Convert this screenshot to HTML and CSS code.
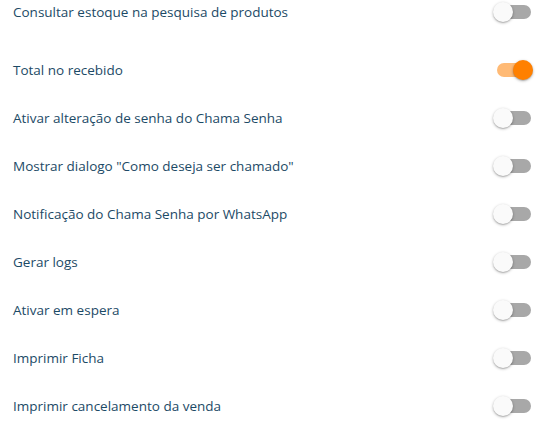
FILE: index.html
```html
<!DOCTYPE html>
<html lang="pt-BR">
<head>
    <meta charset="UTF-8">
    <meta name="viewport" content="width=device-width, initial-scale=1.0">
    <title>Configurações</title>
    <link rel="stylesheet" href="styles.css">
</head>
<body>
    <div class="settings">
        <div class="row first">
            <span class="label">Consultar estoque na pesquisa de produtos</span>
            <label class="switch"><input type="checkbox"><span class="track"></span><span class="thumb"></span></label>
        </div>
        <div class="row">
            <span class="label">Total no recebido</span>
            <label class="switch"><input type="checkbox" checked><span class="track"></span><span class="thumb"></span></label>
        </div>
        <div class="row">
            <span class="label">Ativar alteração de senha do Chama Senha</span>
            <label class="switch"><input type="checkbox"><span class="track"></span><span class="thumb"></span></label>
        </div>
        <div class="row">
            <span class="label">Mostrar dialogo "Como deseja ser chamado"</span>
            <label class="switch"><input type="checkbox"><span class="track"></span><span class="thumb"></span></label>
        </div>
        <div class="row">
            <span class="label">Notificação do Chama Senha por WhatsApp</span>
            <label class="switch"><input type="checkbox"><span class="track"></span><span class="thumb"></span></label>
        </div>
        <div class="row">
            <span class="label">Gerar logs</span>
            <label class="switch"><input type="checkbox"><span class="track"></span><span class="thumb"></span></label>
        </div>
        <div class="row">
            <span class="label">Ativar em espera</span>
            <label class="switch"><input type="checkbox"><span class="track"></span><span class="thumb"></span></label>
        </div>
        <div class="row">
            <span class="label">Imprimir Ficha</span>
            <label class="switch"><input type="checkbox"><span class="track"></span><span class="thumb"></span></label>
        </div>
        <div class="row">
            <span class="label">Imprimir cancelamento da venda</span>
            <label class="switch"><input type="checkbox"><span class="track"></span><span class="thumb"></span></label>
        </div>
    </div>
</body>
</html>
```

FILE: styles.css
```css
body {
    margin: 0;
    background: #fff;
    font-family: 'Open Sans', 'Noto Sans', sans-serif;
    overflow: hidden;
}

.settings {
    margin-top: -12px; /* list is scrolled a little */
    padding: 0 14px 0 13px;
}

.row {
    height: 48px;
    display: flex;
    align-items: center;
    justify-content: space-between;
}

.row.first {
    margin-bottom: 10px;
}

.label {
    font-size: 13.5px;
    font-weight: 500;
    color: #1c4a66;
}

.switch {
    position: relative;
    width: 34px;
    height: 20px;
    display: flex;
    align-items: center;
    cursor: pointer;
}

.switch input {
    display: none;
}

.track {
    width: 34px;
    height: 14px;
    border-radius: 7px;
    background: #a8a8a8;
}

.thumb {
    position: absolute;
    top: 0;
    left: -4px;
    width: 20px;
    height: 20px;
    border-radius: 50%;
    background: #fafafa;
    box-shadow: 0 1px 3px rgba(0, 0, 0, 0.3), 0 1px 1px rgba(0, 0, 0, 0.12);
}

.switch input:checked ~ .track {
    background: #ffba75;
}

.switch input:checked ~ .thumb {
    left: 16px;
    background: #ff8000;
}
```
